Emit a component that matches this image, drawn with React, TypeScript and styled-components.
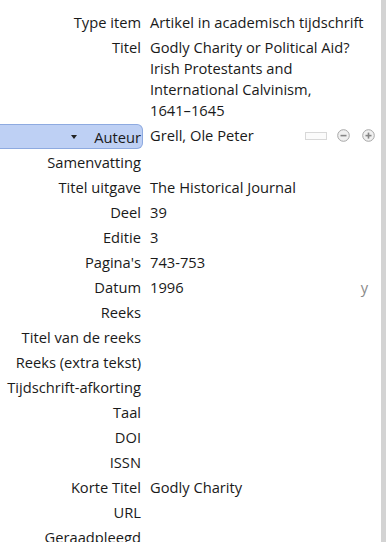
import styled, { createGlobalStyle } from 'styled-components'

const GlobalStyle = createGlobalStyle`
  html, body {
    margin: 0;
    padding: 0;
    background: #ffffff;
  }
  body {
    font-family: 'Open Sans', 'Noto Sans', sans-serif;
    color: #1a1a1a;
  }
`

interface Field {
  label: string
  value?: string
}

// word joiner keeps the year range on one line
const fieldsBefore: Field[] = [
  { label: 'Type item', value: 'Artikel in academisch tijdschrift' },
  { label: 'Titel', value: 'Godly Charity or Political Aid? Irish Protestants and International Calvinism, 1641–\u20601645' },
]

const fieldsAfter: Field[] = [
  { label: 'Samenvatting' },
  { label: 'Titel uitgave', value: 'The Historical Journal' },
  { label: 'Deel', value: '39' },
  { label: 'Editie', value: '3' },
  { label: "Pagina's", value: '743-753' },
  { label: 'Datum', value: '1996' },
  { label: 'Reeks' },
  { label: 'Titel van de reeks' },
  { label: 'Reeks (extra tekst)' },
  { label: 'Tijdschrift-afkorting' },
  { label: 'Taal' },
  { label: 'DOI' },
  { label: 'ISSN' },
  { label: 'Korte Titel', value: 'Godly Charity' },
  { label: 'URL' },
  { label: 'Geraadpleegd' },
]

function MinusIcon() {
  return (
    <svg width='13' height='13' viewBox='0 0 13 13'>
      <circle cx='6.5' cy='6.5' r='5.8' fill='#f0f0f0' stroke='#a6a6a6' />
      <rect x='3.5' y='5.8' width='6' height='1.6' fill='#858585' />
    </svg>
  )
}

function PlusIcon() {
  return (
    <svg width='13' height='13' viewBox='0 0 13 13'>
      <circle cx='6.5' cy='6.5' r='5.8' fill='#f0f0f0' stroke='#a6a6a6' />
      <rect x='3.5' y='5.8' width='6' height='1.6' fill='#858585' />
      <rect x='5.7' y='3.6' width='1.6' height='6' fill='#858585' />
    </svg>
  )
}

function FieldRow({ field, note }: { field: Field; note?: string }) {
  return (
    <>
      <Label>{field.label}</Label>
      <Value>
        <span>{field.value}</span>
        {note && <Note>{note}</Note>}
      </Value>
    </>
  )
}

export default function App() {
  return (
    <>
      <GlobalStyle />
      <Pane>
        <Fields>
          {fieldsBefore.map((f) => (
            <FieldRow key={f.label} field={f} />
          ))}
          <CreatorLabel>
            <Caret />
            Auteur
          </CreatorLabel>
          <Value>
            <span>Grell, Ole Peter</span>
            <CreatorButtons>
              <ModeSwitch />
              <MinusIcon />
              <PlusIcon />
            </CreatorButtons>
          </Value>
          {fieldsAfter.map((f) => (
            <FieldRow key={f.label} field={f} note={f.label === 'Datum' ? 'y' : undefined} />
          ))}
        </Fields>
        <Scrollbar />
      </Pane>
    </>
  )
}

const Pane = styled.div`
  display: flex;
  align-items: stretch;
  width: 386px;
  height: 542px;
  overflow: hidden;
`

const Fields = styled.div`
  flex: 1;
  align-self: flex-start;
  display: grid;
  grid-template-columns: 143px 1fr;
  grid-auto-rows: auto;
  padding-top: 10px;
  font-size: 14.7px;
`

const Label = styled.div`
  text-align: right;
  padding-right: 2px;
  height: 25px;
  line-height: 25px;
  white-space: nowrap;
`

const CreatorLabel = styled.div`
  display: flex;
  align-items: center;
  justify-content: flex-end;
  gap: 17px;
  height: 23px;
  margin: 1px 0;
  padding-right: 1px;
  background: #bed0f4;
  border: 1px solid #8eaae0;
  border-left: none;
  border-radius: 0 6px 6px 0;
`

const Caret = styled.span`
  width: 0;
  height: 0;
  border-left: 3px solid transparent;
  border-right: 3px solid transparent;
  border-top: 4px solid #222;
`

const Value = styled.div`
  display: flex;
  align-items: flex-start;
  justify-content: space-between;
  min-height: 21px;
  padding: 2px 12px 2px 7px;
  line-height: 21px;
`

const Note = styled.span`
  color: #8a8a8a;
  margin-right: 1px;
`

const CreatorButtons = styled.div`
  display: flex;
  align-items: center;
  gap: 12px;
  height: 21px;
  margin-right: -6px;
`

const ModeSwitch = styled.span`
  width: 20px;
  height: 6px;
  border: 1px solid #d8d8d8;
  background: #fbfbfb;
  margin-right: -2px;
`

const Scrollbar = styled.div`
  width: 5px;
  flex-shrink: 0;
  background: #d3d3d3;
`
